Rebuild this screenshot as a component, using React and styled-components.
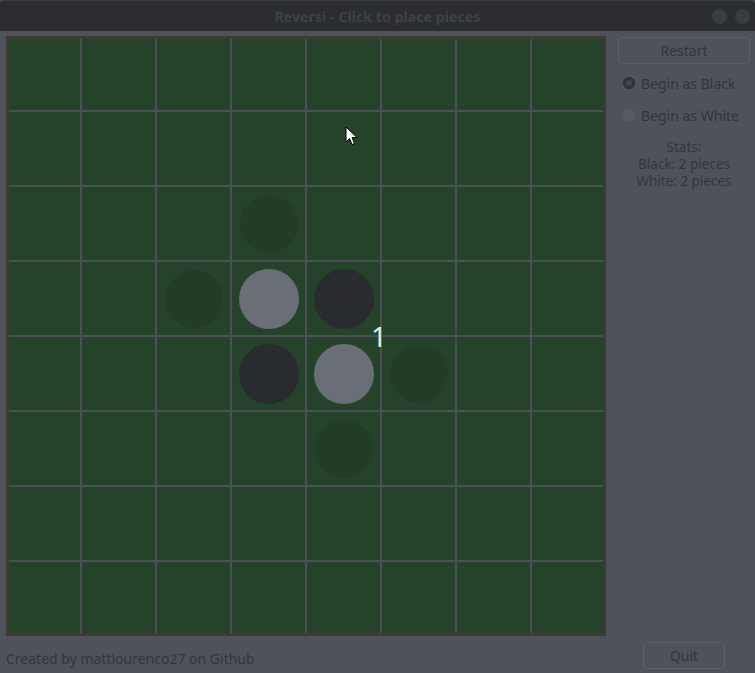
import React from "react";
import styled, { createGlobalStyle, css } from "styled-components";

const GlobalStyle = createGlobalStyle`
  html, body { margin: 0; padding: 0; background: #4e525b; }
  body { font-family: "Noto Sans", "Open Sans", sans-serif; }
  * { box-sizing: border-box; }
`;

const Window = styled.div`
  width: 755px;
  height: 673px;
  display: flex;
  flex-direction: column;
  background: #4e525b;
  overflow: hidden;
`;

const TitleBar = styled.div`
  height: 31px;
  flex: none;
  background: #2b2d31;
  border-top: 1px solid #3a3c41;
  border-radius: 4px 4px 0 0;
  display: grid;
  grid-template-columns: 1fr auto 1fr;
  align-items: center;
`;

const Title = styled.div`
  grid-column: 2;
  font-weight: 700;
  font-size: 14px;
  color: #3e4147;
  letter-spacing: 0.1px;
`;

const WinButtons = styled.div`
  grid-column: 3;
  justify-self: end;
  display: flex;
  gap: 8px;
  padding-right: 5px;
`;

const WinButton = styled.div`
  width: 15px;
  height: 15px;
  border-radius: 50%;
  background: #393c41;
`;

const Main = styled.div`
  display: flex;
  padding: 5px 0 0 6px;
  gap: 12px;
`;

const Board = styled.div`
  position: relative;
  width: 600px;
  height: 600px;
  flex: none;
  background: #25432b;
  display: grid;
  grid-template-columns: repeat(8, 75px);
  grid-template-rows: repeat(8, 75px);
  &::after {
    content: "";
    position: absolute;
    inset: 0;
    border: 3px solid #3d3a2f;
    pointer-events: none;
  }
`;

const Cell = styled.div`
  border: 1px solid #4c5056;
  display: flex;
  align-items: center;
  justify-content: center;
`;

const Disc = styled.div`
  width: 60px;
  height: 60px;
  border-radius: 50%;
  ${(p) =>
    p.$kind === "white" &&
    css`
      background: #6a6e77;
    `}
  ${(p) =>
    p.$kind === "black" &&
    css`
      background: #27292d;
      background-image: repeating-linear-gradient(
        135deg,
        rgba(60, 64, 70, 0.3) 0 1px,
        transparent 1px 3px
      );
    `}
  ${(p) =>
    p.$kind === "hint" &&
    css`
      width: 58px;
      height: 58px;
      background: rgba(32, 56, 38, 0.3);
      background-image: repeating-linear-gradient(
        125deg,
        rgba(22, 38, 28, 0.28) 0 1px,
        transparent 1px 3px
      );
    `}
`;

const MoveLabel = styled.div`
  position: absolute;
  left: 365px;
  top: 286px;
  font-size: 28px;
  line-height: 28px;
  color: #e2ebe2;
  font-family: "Noto Sans", sans-serif;
`;

const Cursor = styled.svg`
  position: absolute;
  left: 339px;
  top: 90px;
  width: 13px;
  height: 20px;
`;

const Side = styled.div`
  width: 132px;
  display: flex;
  flex-direction: column;
  padding-top: 1px;
  color: #33363c;
  font-size: 14px;
`;

const Button = styled.div`
  height: 27px;
  border: 1px solid #5c6069;
  border-radius: 4px;
  display: flex;
  align-items: center;
  justify-content: center;
  color: #33363c;
  font-size: 14px;
  width: ${(p) => p.$w || "100%"};
`;

const RadioRow = styled.div`
  display: flex;
  align-items: center;
  gap: 6px;
  height: 32px;
  padding-left: 5px;
  margin-top: ${(p) => (p.$first ? "3px" : "0")};
`;

const RadioMark = styled.span`
  width: 12px;
  height: 12px;
  border-radius: 50%;
  ${(p) =>
    p.$checked
      ? css`
          background: #2f3237;
          box-shadow: inset 0 0 0 3px #2f3237, inset 0 0 0 6px #43464c;
        `
      : css`
          background: #555a62;
          border: 1px solid #5d6169;
        `}
`;

const Stats = styled.div`
  margin-top: 8px;
  text-align: center;
  font-size: 13.5px;
  line-height: 17px;
`;

const Footer = styled.div`
  display: flex;
  justify-content: space-between;
  align-items: center;
  padding: 6px 30px 0 6px;
`;

const Credit = styled.div`
  font-size: 14px;
  color: #33363c;
  padding-top: 6px;
`;

const board = Array.from({ length: 8 }, () => Array(8).fill(null));
board[3][3] = "white";
board[3][4] = "black";
board[4][3] = "black";
board[4][4] = "white";
board[2][3] = "hint";
board[3][2] = "hint";
board[4][5] = "hint";
board[5][4] = "hint";

export default function App() {
  return (
    <>
      <GlobalStyle />
      <Window>
        <TitleBar>
          <Title>Reversi - Click to place pieces</Title>
          <WinButtons>
            <WinButton />
            <WinButton />
          </WinButtons>
        </TitleBar>
        <Main>
          <Board>
            {board.flat().map((v, i) => (
              <Cell key={i}>{v && <Disc $kind={v} />}</Cell>
            ))}
            <MoveLabel>1</MoveLabel>
            <Cursor viewBox="0 0 13 20">
              <path
                d="M1 1 L1 16 L4.5 12.5 L7 18.5 L9.5 17.5 L7 11.5 L12 11.5 Z"
                fill="#fff"
                stroke="#000"
                strokeWidth="1"
                strokeLinejoin="round"
              />
            </Cursor>
          </Board>
          <Side>
            <Button>Restart</Button>
            <RadioRow $first>
              <RadioMark $checked />
              <span>Begin as Black</span>
            </RadioRow>
            <RadioRow>
              <RadioMark />
              <span>Begin as White</span>
            </RadioRow>
            <Stats>
              Stats:
              <br />
              Black: 2 pieces
              <br />
              White: 2 pieces
            </Stats>
          </Side>
        </Main>
        <Footer>
          <Credit>Created by mattlourenco27 on Github</Credit>
          <Button $w="82px">Quit</Button>
        </Footer>
      </Window>
    </>
  );
}
